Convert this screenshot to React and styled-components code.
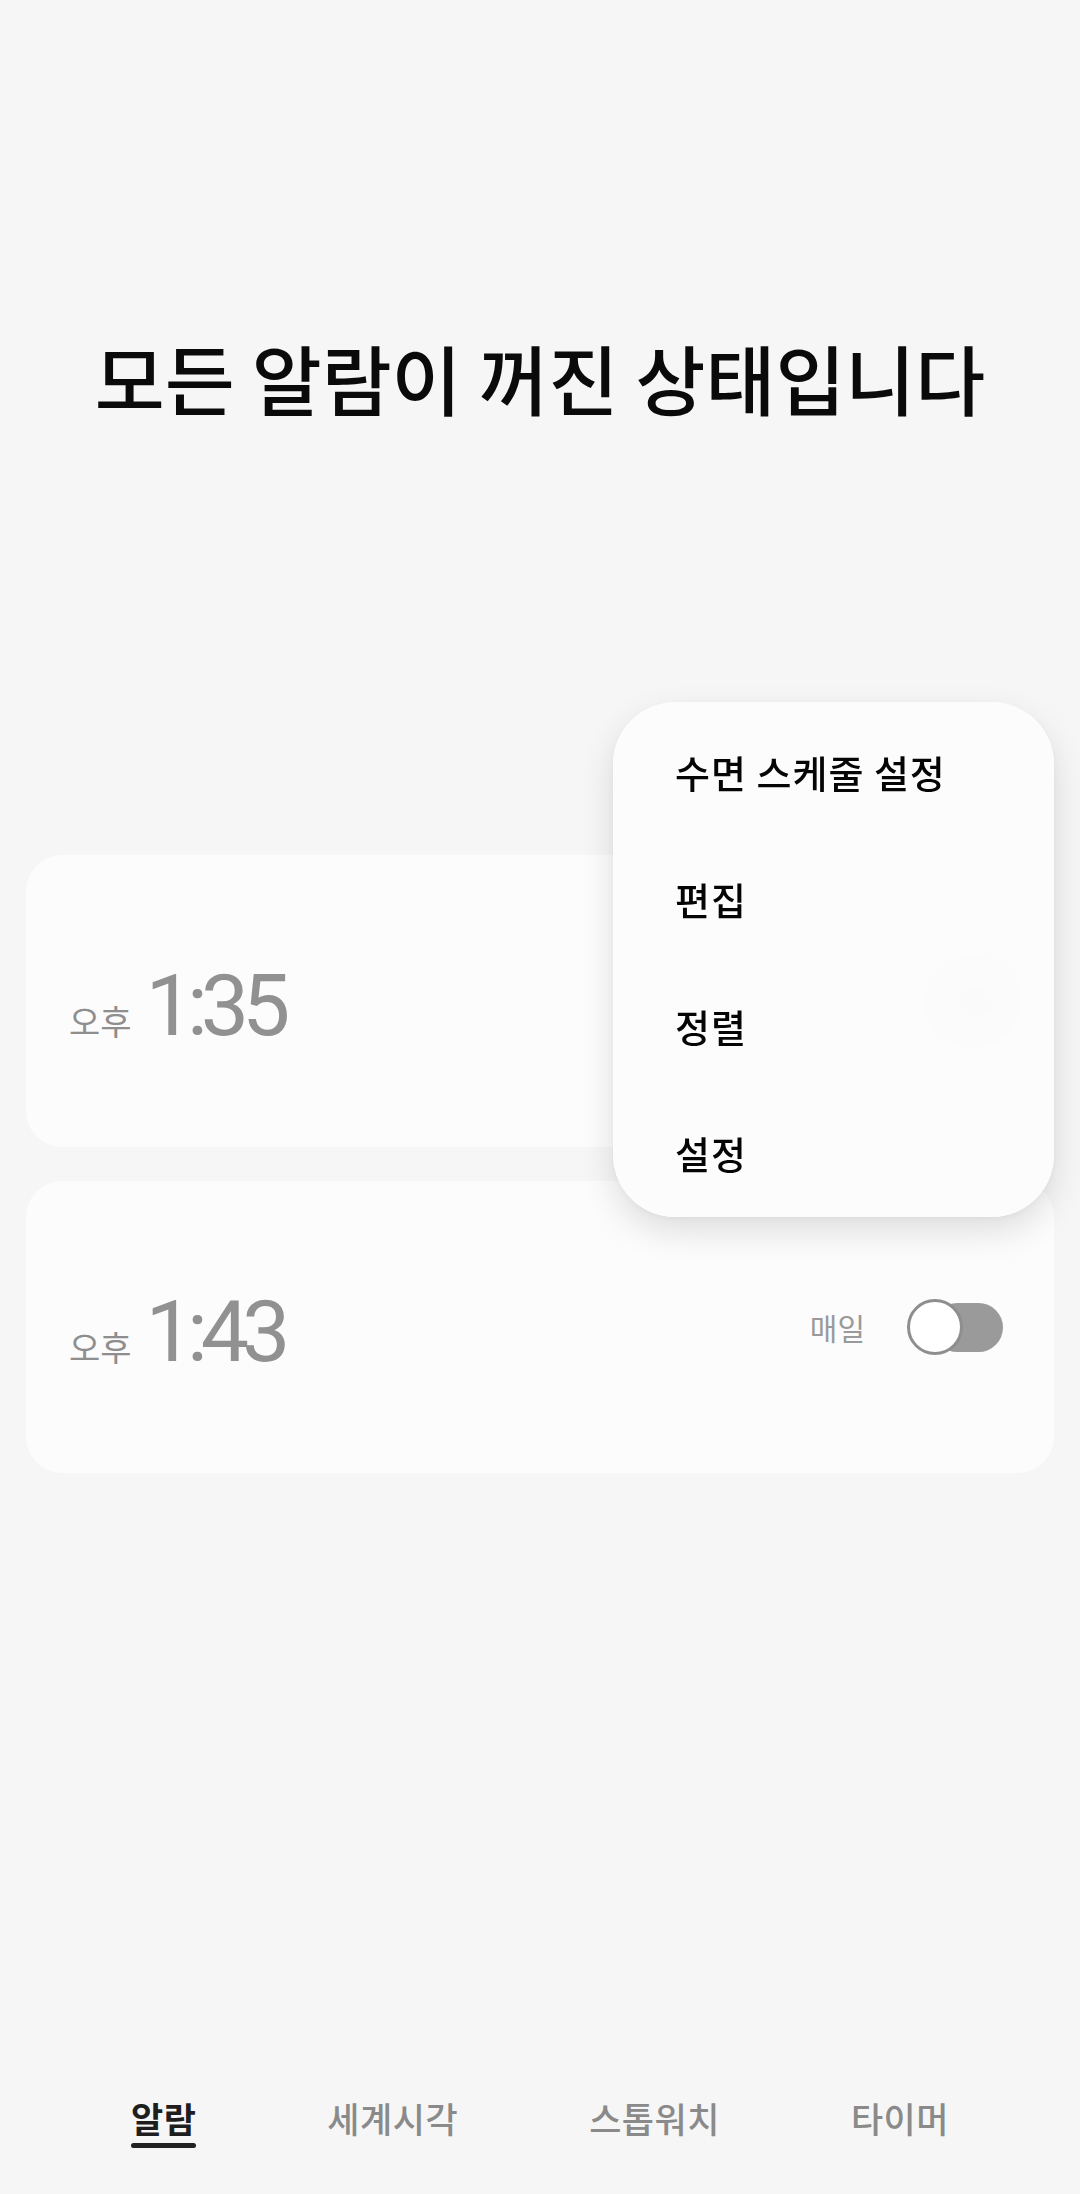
import React from 'react';
import styled, { createGlobalStyle } from 'styled-components';

const GlobalStyle = createGlobalStyle`
  html, body {
    margin: 0;
    padding: 0;
    background: #f6f6f6;
  }
  body {
    font-family: "Noto Sans CJK KR", "Noto Sans", sans-serif;
  }
`;

const Page = styled.div`
  position: relative;
  width: 1080px;
  height: 2194px;
  display: flex;
  flex-direction: column;
  background: #f6f6f6;
  overflow: hidden;
`;

const Header = styled.header`
  height: 855px;
  padding-top: 332px;
  box-sizing: border-box;
  display: flex;
  justify-content: center;
`;

const Title = styled.h1`
  margin: 0;
  font-size: 76px;
  line-height: 90px;
  font-weight: 500;
  letter-spacing: 0;
  color: #0a0a0a;
`;

const List = styled.div`
  display: flex;
  flex-direction: column;
  gap: 34px;
  padding: 0 26px;
`;

const Card = styled.div`
  height: 292px;
  box-sizing: border-box;
  padding: 0 51px 0 43px;
  background: #fcfcfc;
  border-radius: 36px;
  display: flex;
  align-items: center;
  justify-content: space-between;
`;

const TimeRow = styled.div`
  display: flex;
  align-items: baseline;
  gap: 14px;
  margin-top: 10px;
`;

const Meridiem = styled.span`
  font-size: 34px;
  color: #8e8e8e;
`;

const Clock = styled.span`
  font-family: Roboto, "Noto Sans", sans-serif;
  font-size: 86px;
  line-height: 1;
  font-weight: 400;
  letter-spacing: -7px;
  color: #919191;
`;

const Right = styled.div`
  display: flex;
  align-items: center;
  gap: 42px;
`;

const Repeat = styled.span`
  font-size: 30px;
  color: #9a9a9a;
`;

const Switch = styled.div`
  position: relative;
  width: 96px;
  height: 56px;
`;

const Track = styled.div`
  position: absolute;
  right: 0;
  top: 4px;
  width: 70px;
  height: 49px;
  border-radius: 25px;
  background: #9a9a9a;
`;

const Thumb = styled.div`
  position: absolute;
  left: 0;
  top: 0;
  width: 56px;
  height: 56px;
  box-sizing: border-box;
  border-radius: 50%;
  border: 3px solid #8e8e8e;
  background: #ffffff;
`;

const Menu = styled.div`
  position: absolute;
  left: 613px;
  top: 702px;
  width: 441px;
  height: 515px;
  box-sizing: border-box;
  padding-top: 6px;
  border-radius: 62px;
  background: rgba(252, 252, 252, 0.94);
  backdrop-filter: blur(30px);
  box-shadow: 0 14px 34px rgba(0, 0, 0, 0.12), 0 2px 8px rgba(0, 0, 0, 0.04);
`;

const MenuItem = styled.div`
  height: 127px;
  padding-left: 62px;
  display: flex;
  align-items: center;
  font-size: 38px;
  font-weight: 500;
  letter-spacing: 1px;
  color: #050505;
`;

const TabBar = styled.nav`
  margin-top: auto;
  padding-bottom: 46px;
  display: flex;
  justify-content: space-evenly;
`;

const Tab = styled.div`
  display: flex;
  flex-direction: column;
  align-items: stretch;
  gap: 5px;
`;

const TabLabel = styled.span`
  font-size: 35px;
  line-height: 40px;
  letter-spacing: 0.5px;
  font-weight: ${({ $active }) => ($active ? 700 : 500)};
  color: ${({ $active }) => ($active ? '#1e1e1e' : '#8a8a8a')};
`;

const Underline = styled.span`
  height: 5px;
  border-radius: 3px;
  background: ${({ $active }) => ($active ? '#222222' : 'transparent')};
`;

const alarms = [
  { meridiem: '오후', time: '1:35', repeat: '매일' },
  { meridiem: '오후', time: '1:43', repeat: '매일' },
];

const menuItems = ['수면 스케줄 설정', '편집', '정렬', '설정'];
const tabs = ['알람', '세계시각', '스톱워치', '타이머'];

export default function App() {
  return (
    <>
      <GlobalStyle />
      <Page>
        <Header>
          <Title>모든 알람이 꺼진 상태입니다</Title>
        </Header>

        <List>
          {alarms.map((a, i) => (
            <Card key={i}>
              <TimeRow>
                <Meridiem>{a.meridiem}</Meridiem>
                <Clock>{a.time}</Clock>
              </TimeRow>
              <Right>
                <Repeat>{a.repeat}</Repeat>
                <Switch>
                  <Track />
                  <Thumb />
                </Switch>
              </Right>
            </Card>
          ))}
        </List>

        <TabBar>
          {tabs.map((t, i) => (
            <Tab key={t}>
              <TabLabel $active={i === 0}>{t}</TabLabel>
              <Underline $active={i === 0} />
            </Tab>
          ))}
        </TabBar>

        <Menu>
          {menuItems.map((m) => (
            <MenuItem key={m}>{m}</MenuItem>
          ))}
        </Menu>
      </Page>
    </>
  );
}
